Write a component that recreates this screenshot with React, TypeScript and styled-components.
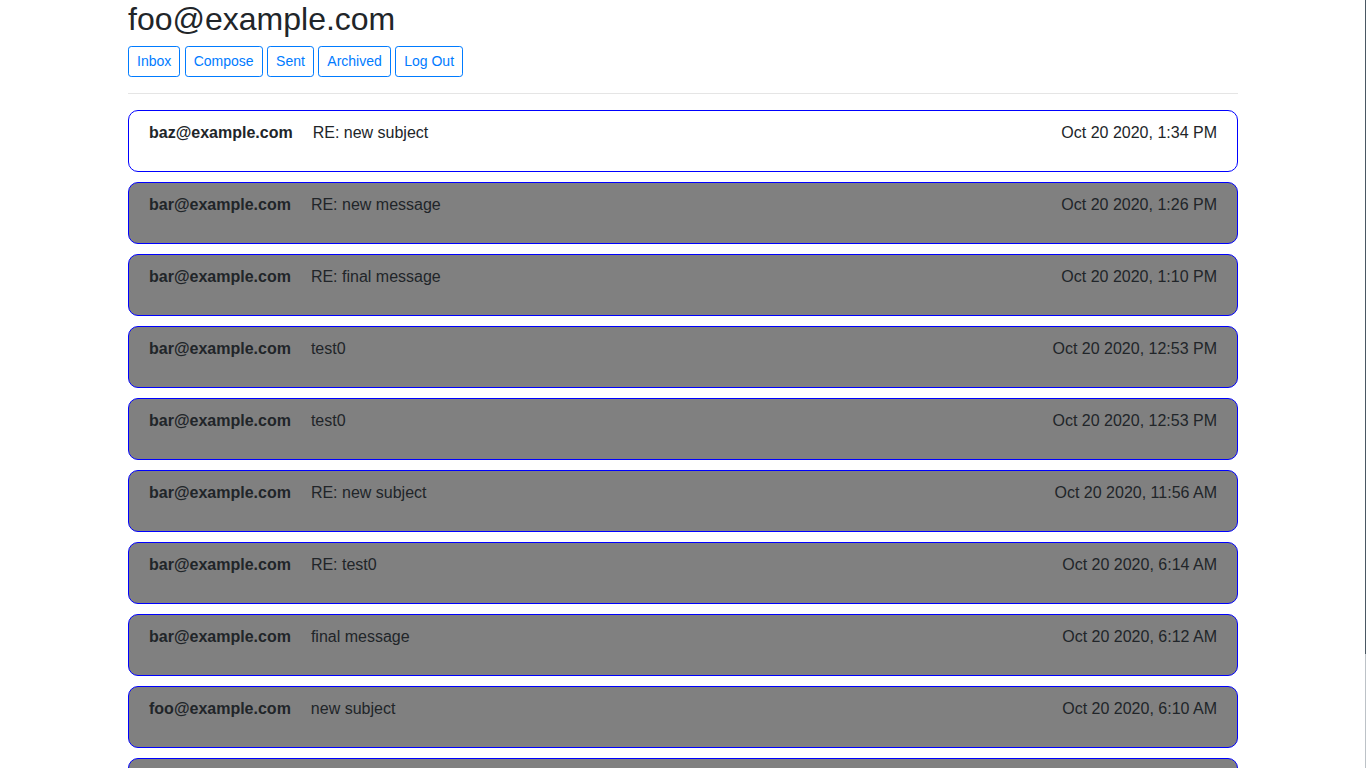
import styled, { createGlobalStyle } from 'styled-components';

const GlobalStyle = createGlobalStyle`
  html {
    scrollbar-width: none;
  }
  html::-webkit-scrollbar {
    display: none;
  }
  body {
    margin: 0;
    font-family: "Liberation Sans", Arial, sans-serif;
    font-size: 16px;
    line-height: 1.5;
    color: #212529;
    background: #fff;
  }
  * {
    box-sizing: border-box;
  }
`;

const Container = styled.div`
  max-width: 1140px;
  margin: 0 auto;
  padding: 0 15px;
`;

const UserTitle = styled.h2`
  margin: 0 0 8px;
  font-size: 32px;
  font-weight: 500;
  line-height: 1.2;
`;

const Nav = styled.div`
  display: flex;
  gap: 4.45px;
`;

const NavButton = styled.button`
  padding: 4px 8px;
  font-family: inherit;
  font-size: 14px;
  line-height: 1.5;
  color: #007bff;
  background: transparent;
  border: 1px solid #007bff;
  border-radius: 3.2px;
  cursor: pointer;
`;

const Divider = styled.hr`
  margin: 16px 0;
  border: 0;
  border-top: 1px solid rgba(0, 0, 0, 0.1);
`;

const MailList = styled.div`
  display: flex;
  flex-direction: column;
  gap: 10px;
  padding-bottom: 10px;
`;

const MailRow = styled.div<{ $read: boolean }>`
  display: flex;
  align-items: flex-start;
  height: 62px;
  padding: 10px 20px;
  background: ${(p) => (p.$read ? 'gray' : 'white')};
  border: 1px solid blue;
  border-radius: 10px;
  cursor: pointer;
`;

const Sender = styled.span`
  margin-right: 20px;
  font-weight: 700;
`;

const Subject = styled.span`
  flex: 1;
`;

const Stamp = styled.span``;

const ScrollTrack = styled.div`
  position: fixed;
  top: 0;
  right: 0;
  width: 1px;
  height: 100vh;
  background: #bcc2c7;
`;

const ScrollThumb = styled.div`
  width: 1px;
  height: 654px;
  background: #4a5863;
`;

const emails = [
  { id: 1, sender: 'baz@example.com', subject: 'RE: new subject', timestamp: 'Oct 20 2020, 1:34 PM', read: false },
  { id: 2, sender: 'bar@example.com', subject: 'RE: new message', timestamp: 'Oct 20 2020, 1:26 PM', read: true },
  { id: 3, sender: 'bar@example.com', subject: 'RE: final message', timestamp: 'Oct 20 2020, 1:10 PM', read: true },
  { id: 4, sender: 'bar@example.com', subject: 'test0', timestamp: 'Oct 20 2020, 12:53 PM', read: true },
  { id: 5, sender: 'bar@example.com', subject: 'test0', timestamp: 'Oct 20 2020, 12:53 PM', read: true },
  { id: 6, sender: 'bar@example.com', subject: 'RE: new subject', timestamp: 'Oct 20 2020, 11:56 AM', read: true },
  { id: 7, sender: 'bar@example.com', subject: 'RE: test0', timestamp: 'Oct 20 2020, 6:14 AM', read: true },
  { id: 8, sender: 'bar@example.com', subject: 'final message', timestamp: 'Oct 20 2020, 6:12 AM', read: true },
  { id: 9, sender: 'foo@example.com', subject: 'new subject', timestamp: 'Oct 20 2020, 6:10 AM', read: true },
  { id: 10, sender: 'foo@example.com', subject: 'new message', timestamp: 'Oct 20 2020, 6:08 AM', read: true },
  { id: 11, sender: 'bar@example.com', subject: 'test0', timestamp: 'Oct 20 2020, 6:02 AM', read: true },
];

export default function App() {
  return (
    <>
      <GlobalStyle />
      <Container>
        <UserTitle>foo@example.com</UserTitle>
        <Nav>
          <NavButton>Inbox</NavButton>
          <NavButton>Compose</NavButton>
          <NavButton>Sent</NavButton>
          <NavButton>Archived</NavButton>
          <NavButton>Log Out</NavButton>
        </Nav>
        <Divider />
        <MailList>
          {emails.map((email) => (
            <MailRow key={email.id} $read={email.read}>
              <Sender>{email.sender}</Sender>
              <Subject>{email.subject}</Subject>
              <Stamp>{email.timestamp}</Stamp>
            </MailRow>
          ))}
        </MailList>
      </Container>
      <ScrollTrack>
        <ScrollThumb />
      </ScrollTrack>
    </>
  );
}
